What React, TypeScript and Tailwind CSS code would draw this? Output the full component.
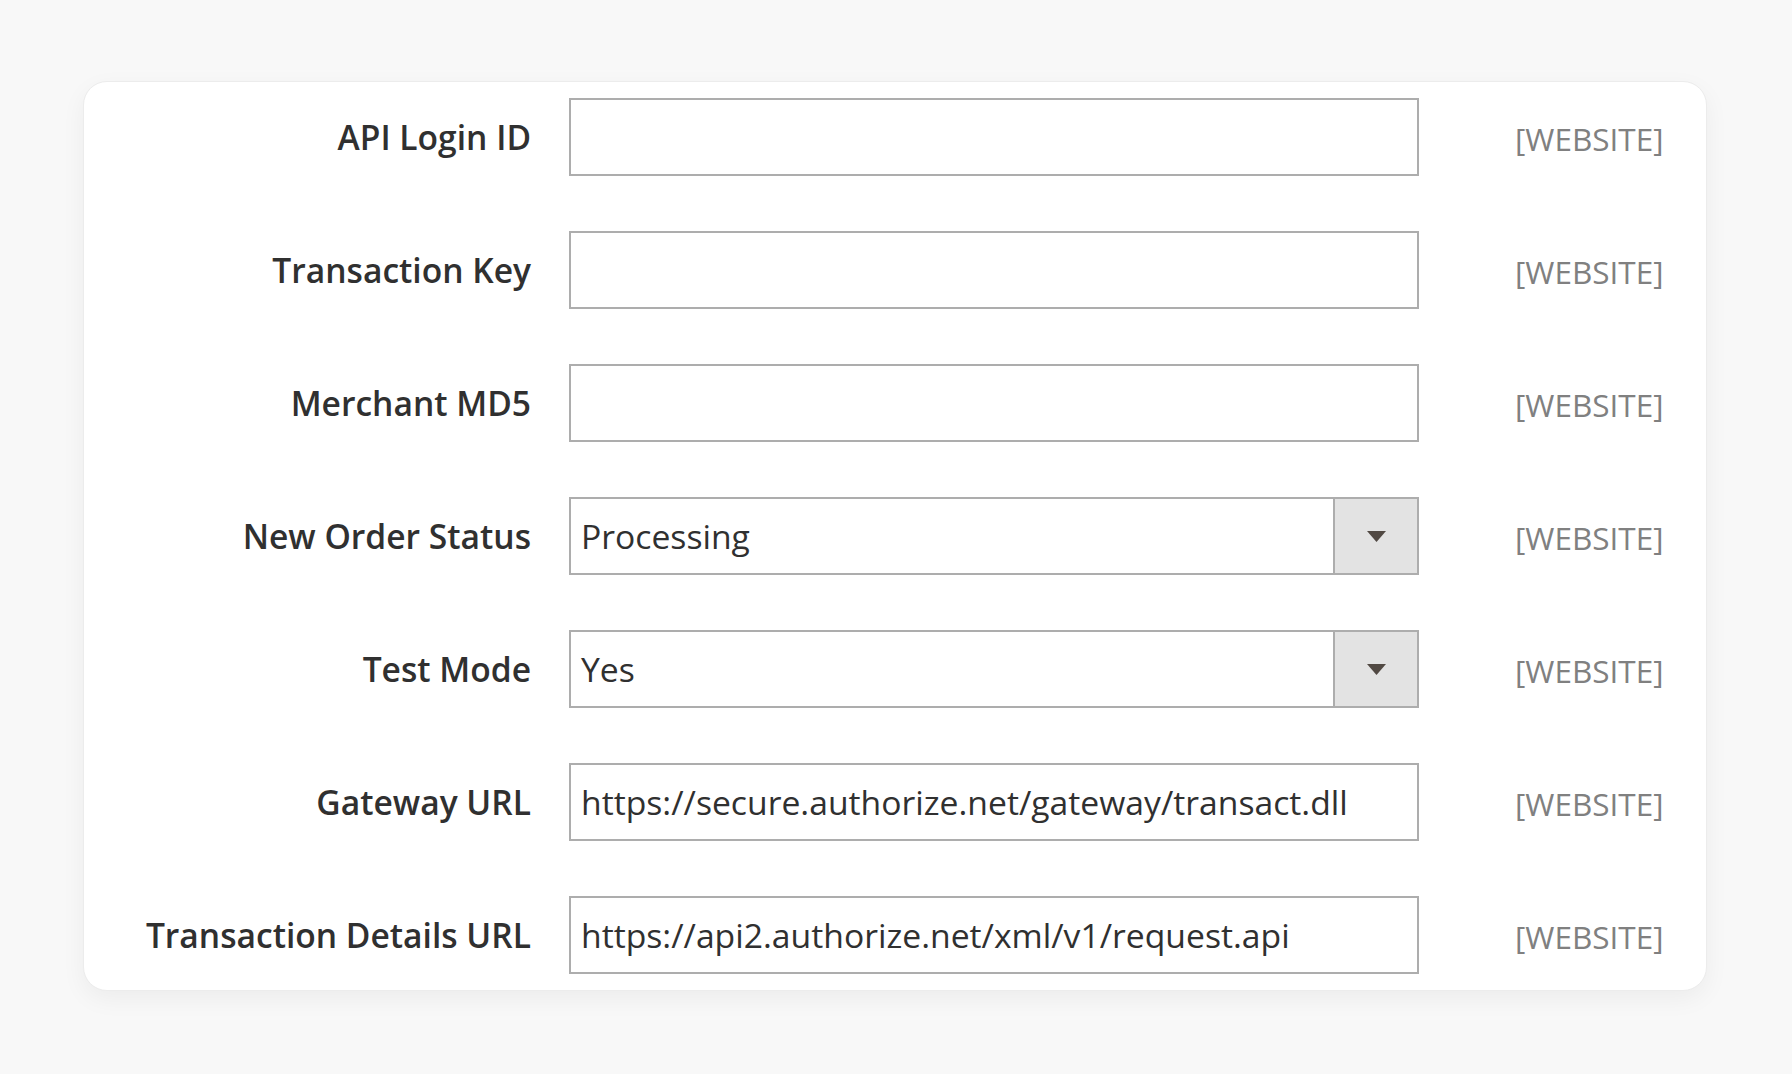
const FIELDS: { label: string; value?: string; select?: boolean }[] = [
  { label: 'API Login ID' },
  { label: 'Transaction Key' },
  { label: 'Merchant MD5' },
  { label: 'New Order Status', value: 'Processing', select: true },
  { label: 'Test Mode', value: 'Yes', select: true },
  { label: 'Gateway URL', value: 'https://secure.authorize.net/gateway/transact.dll' },
  { label: 'Transaction Details URL', value: 'https://api2.authorize.net/xml/v1/request.api' },
];

function Field({ value, select }: { value?: string; select?: boolean }) {
  return (
    <div className="flex h-[78px] w-[850px] items-stretch border-2 border-[#adadad] bg-white">
      <div className="flex flex-1 items-center pl-[10px] text-[33.7px] text-[#303030]">{value}</div>
      {select && (
        <div className="flex w-[84px] items-center justify-center border-l-2 border-[#adadad] bg-[#e3e3e3]">
          <svg width="19" height="11" viewBox="0 0 19 11">
            <path d="M0 0h19l-9.5 11z" fill="#514943" />
          </svg>
        </div>
      )}
    </div>
  );
}

export default function App() {
  return (
    <div className="min-h-screen bg-[#f8f8f8] pt-[81px] pl-[83px] font-['Open_Sans',sans-serif]">
      <div className="w-[1624px] rounded-[24px] border border-[#ececec] bg-white pt-[16px] pb-[16px] shadow-[0_8px_24px_rgba(0,0,0,0.05)]">
        <div className="flex flex-col gap-[55px]">
          {FIELDS.map(f => (
            <div key={f.label} className="flex items-center">
              <div className="w-[447px] text-right text-[33.6px] font-[560] text-[#303030]">{f.label}</div>
              <div className="ml-[38px]">
                <Field value={f.value} select={f.select} />
              </div>
              <div className="ml-[96px] pt-[3px] text-[31.5px] text-[#808080]">[WEBSITE]</div>
            </div>
          ))}
        </div>
      </div>
    </div>
  );
}
